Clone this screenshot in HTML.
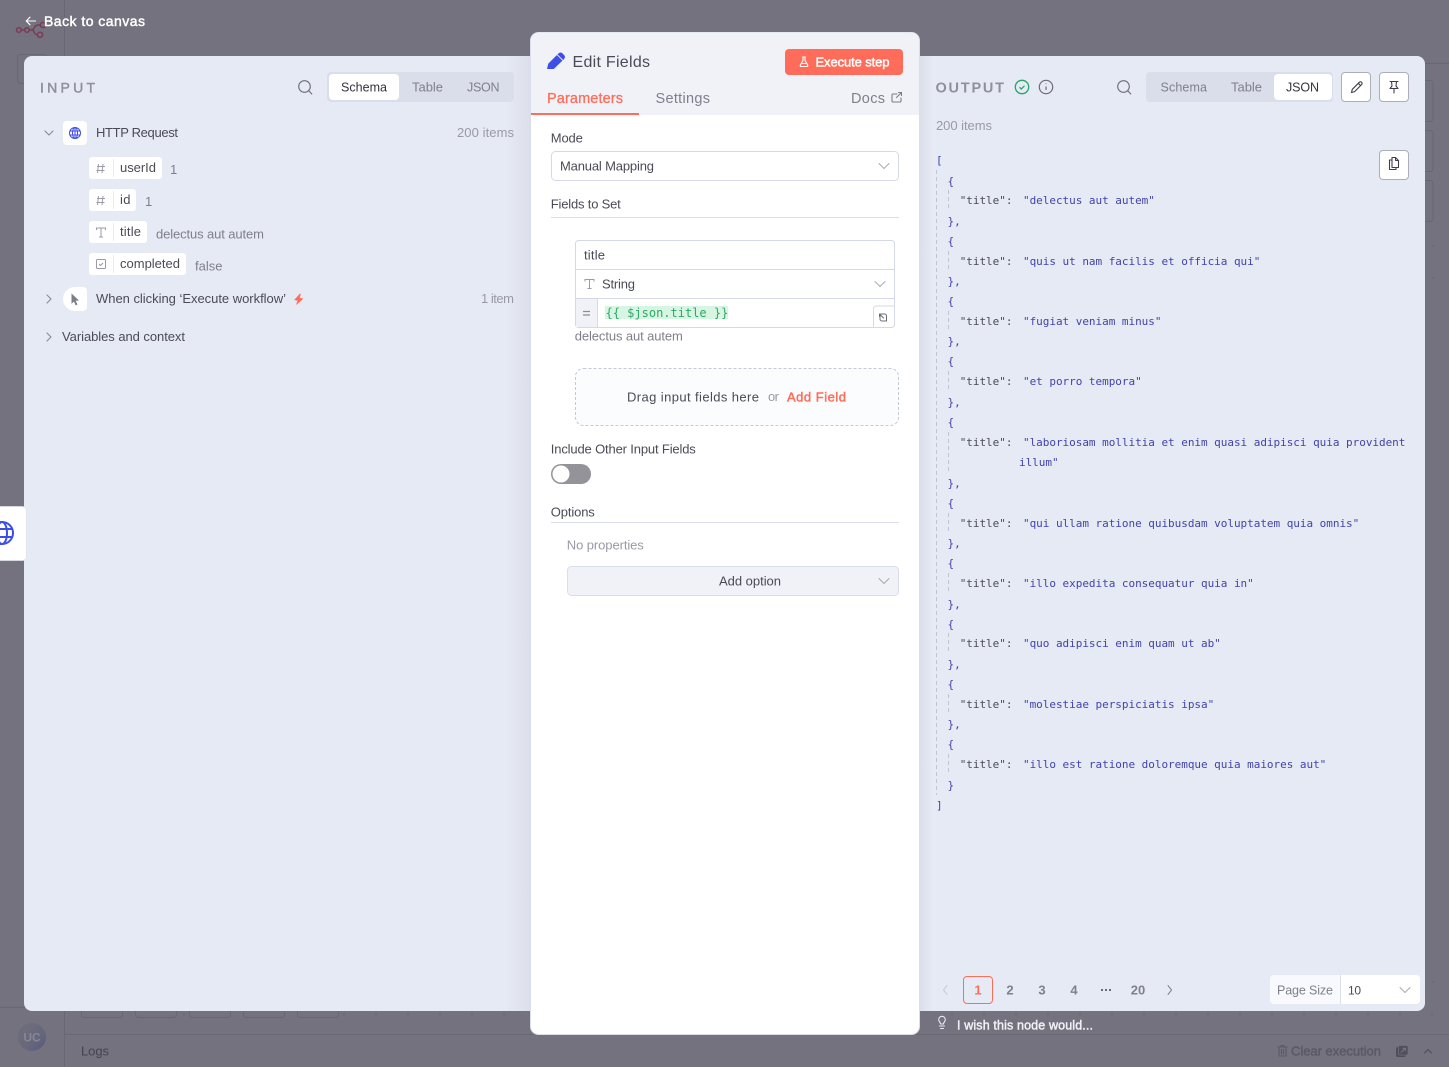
<!DOCTYPE html>
<html lang="en"><head><meta charset="utf-8"><title>Edit Fields</title>
<style>
html,body{margin:0;padding:0;width:1449px;height:1067px;overflow:hidden;background:#74727e}
svg{position:absolute;left:0;top:0;display:block}
.s{font:13px "Liberation Sans",sans-serif;fill:#4b4b57}
.g{fill:#80808c}
.l{fill:#9a9aa6}
.c{fill:#ff6d5a}
.w{fill:#fff}
.m{stroke:currentColor;stroke-width:.45px}
.t{font-size:12.5px}
.j{font:11px "DejaVu Sans Mono",monospace;fill:#4a4a55;letter-spacing:-.03px}
.v{fill:#4343ab}
.i{fill:none;stroke:#6b6b76;stroke-width:1.1;stroke-linecap:round;stroke-linejoin:round}
</style></head><body>
<svg width="1449" height="1067" viewBox="0 0 1449 1067" xmlns="http://www.w3.org/2000/svg">
<defs>
<linearGradient id="av" x1="0" y1="0" x2="1" y2="1"><stop offset="0" stop-color="#716f7c"/><stop offset=".6" stop-color="#67677c"/><stop offset="1" stop-color="#55597f"/></linearGradient>
<linearGradient id="sl" x1="0" x2="1"><stop offset="0" stop-color="#e6eaf4"/><stop offset="1" stop-color="#dcdfea"/></linearGradient>
<linearGradient id="sr" x1="0" x2="1"><stop offset="0" stop-color="#dcdfea"/><stop offset="1" stop-color="#e6eaf4"/></linearGradient>
</defs>

<!-- backdrop -->
<g fill="none" stroke="#696773">
<path d="M64.500 0V1067M65 1034.500H1449M0 1007.500H64M1425 63.500H1449"/>
<rect x="17.500" y="54.500" width="29" height="29" rx="3"/>
<rect x="1400" y="80.500" width="33" height="41" rx="3"/>
<rect x="1400" y="130.500" width="33" height="41" rx="3"/>
<rect x="1400" y="180.500" width="33" height="41" rx="3"/>
<rect x="81.500" y="990" width="41" height="27.500" rx="3"/>
<rect x="135.500" y="990" width="41" height="27.500" rx="3"/>
<rect x="189.500" y="990" width="41" height="27.500" rx="3"/>
<rect x="243.500" y="990" width="41" height="27.500" rx="3"/>
<rect x="297.500" y="990" width="41" height="27.500" rx="3"/>
</g>
<g fill="#62606c">
<circle cx="184" cy="1014.500" r=".8"/><circle cx="344" cy="1014.500" r=".8"/><circle cx="376" cy="1014.500" r=".8"/><circle cx="408" cy="1014.500" r=".8"/><circle cx="440" cy="1014.500" r=".8"/><circle cx="472" cy="1014.500" r=".8"/><circle cx="504" cy="1014.500" r=".8"/>
<circle cx="952" cy="1014.500" r=".8"/><circle cx="984" cy="1014.500" r=".8"/><circle cx="1016" cy="1014.500" r=".8"/><circle cx="1048" cy="1014.500" r=".8"/><circle cx="1080" cy="1014.500" r=".8"/><circle cx="1112" cy="1014.500" r=".8"/><circle cx="1144" cy="1014.500" r=".8"/><circle cx="1176" cy="1014.500" r=".8"/><circle cx="1208" cy="1014.500" r=".8"/><circle cx="1240" cy="1014.500" r=".8"/><circle cx="1272" cy="1014.500" r=".8"/><circle cx="1304" cy="1014.500" r=".8"/><circle cx="1336" cy="1014.500" r=".8"/><circle cx="1368" cy="1014.500" r=".8"/><circle cx="1400" cy="1014.500" r=".8"/><circle cx="1432" cy="1014.500" r=".8"/>
<circle cx="1433" cy="246" r=".8"/><circle cx="1433" cy="278" r=".8"/><circle cx="1433" cy="982" r=".8"/>
</g>
<!-- n8n logo -->
<g fill="none" stroke="#7b3a55" stroke-width="1.500">
<circle cx="18.800" cy="30" r="2.300"/><circle cx="27" cy="30" r="2.300"/><circle cx="40" cy="34.800" r="2.600"/><circle cx="43" cy="25" r="2.600"/>
<path d="M21.100 30h3.600M29.300 30h2.700c2.500 0 1.500 4.800 5.400 4.800M32 30c2.400 0 1.600-5 6-5h2.400"/>
</g>
<circle cx="32" cy="1037" r="14" fill="url(#av)"/>
<text x="32" y="1041.500" text-anchor="middle" font-family="Liberation Sans" font-size="12" font-weight="700" fill="#888693">UC</text>
<path class="i" style="stroke:#fff" d="M35.500 21h-9M30 17.200 26.200 21l3.800 3.800"/>
<text class="s w m" style="font-size:14px;color:#fff" x="44" y="26" textLength="101">Back to canvas</text>
<text class="s" style="fill:#44434f" x="81" y="1055.500" textLength="28">Logs</text>
<g class="i" style="stroke:#5a5964"><path d="M1278 1047h9M1281 1047v-1.500h3v1.500M1279 1047.500v8.500h7v-8.500M1281.500 1049.500v4.500M1283.500 1049.500v4.500"/></g>
<text class="s m" style="fill:#5a5964;color:#5a5964" x="1291" y="1055.500" textLength="90">Clear execution</text>
<rect x="1396.500" y="1047.500" width="9" height="9" rx="1.500" fill="#4f4e59" stroke="#4f4e59"/><rect x="1398.500" y="1045.500" width="9.500" height="9.500" rx="1.500" fill="#4f4e59" stroke="#74727e" stroke-width=".7"/>
<path d="M1400.800 1052.700l4.500-4.500M1402.300 1048.200h3v3" fill="none" stroke="#7d7c88" stroke-width=".9"/>
<path class="i" style="stroke:#4f4e59" d="M1424.500 1053l3.500-3.500 3.500 3.500"/>
<path class="i" style="stroke:#e8e8ee" d="M939.500 1026h5M940.500 1028.500h3M940.500 1024c0-2-1.800-2.300-1.800-4.400a3.300 3.300 0 0 1 6.600 0c0 2.100-1.800 2.400-1.800 4.400z"/>
<text class="s w m" style="font-size:12.500px;color:#f1f1f4;fill:#f1f1f4" x="957" y="1029.500" textLength="136">I wish this node would...</text>

<!-- panels -->
<rect x="24" y="56" width="1401" height="955" rx="8" fill="#e6eaf4"/>
<rect x="505" y="56" width="26" height="955" fill="url(#sl)"/>
<rect x="919" y="56" width="14" height="955" fill="url(#sr)"/>
<!-- side node tab -->
<rect x="-12" y="506.500" width="38.500" height="54" rx="4" fill="#fff" stroke="#dfe2eb" stroke-width=".8"/>
<g fill="none" stroke="#3d4de8" stroke-width="2">
<circle cx="2" cy="533" r="11"/><ellipse cx="2" cy="533" rx="5" ry="11"/><path d="M-9 529h22M-9 537h22"/></g>

<!-- INPUT -->
<text class="s m" style="font-size:14px;fill:#90909b;color:#90909b" x="40" y="92.500" textLength="55">INPUT</text>
<g class="i"><circle cx="304.500" cy="86.500" r="5.800"/><path d="M309 91l2.800 3"/></g>
<rect x="327" y="72" width="187" height="30" rx="4" fill="#d9deea"/>
<rect x="329" y="74" width="70" height="26" rx="4" fill="#fff"/>
<text class="s t" style="fill:#33333d" x="341" y="91.500" textLength="46">Schema</text>
<text class="s g" x="412" y="91.500" textLength="31">Table</text>
<text class="s g t" x="467" y="91.500" textLength="32.500">JSON</text>

<path class="i" d="M45 131l4 4 4-4" style="stroke:#8a8a95"/>
<rect x="63" y="121" width="24" height="24" rx="4" fill="#fff"/>
<g fill="none" stroke="#3f4fe6" stroke-width="1"><circle cx="75" cy="133" r="5.500"/><ellipse cx="75" cy="133" rx="2.500" ry="5.500"/><path d="M69.500 131h11M69.500 135h11M75 127.500v11"/></g>
<text class="s" x="96" y="137" textLength="82">HTTP Request</text>
<text class="s l" x="457" y="137" textLength="57">200 items</text>

<g fill="#fff">
<rect x="89" y="157" width="73" height="22" rx="3"/>
<rect x="89" y="189" width="47" height="22" rx="3"/>
<rect x="89" y="221" width="58" height="22" rx="3"/>
<rect x="89" y="253" width="97" height="22" rx="3"/>
</g>
<path d="M113.500 159v18M113.500 191v18M113.500 223v18M113.500 255v18" stroke="#e6eaf4"/>
<g fill="none" stroke="#9b9ba6" stroke-width="1">
<path d="M98.500 164l-1 9M103 164l-1 9M97 166.500h8M96.500 170.500h8"/>
<path d="M98.500 196l-1 9M103 196l-1 9M97 198.500h8M96.500 202.500h8"/>
<path d="M96.500 230v-2h9v2M101 228v9M99 237h4"/>
<rect x="96.500" y="259.500" width="9" height="9" rx="1"/><path d="M99 264l1.500 1.500 2.500-2.500"/>
</g>
<text class="s" x="120" y="172" textLength="36">userId</text>
<text class="s g" x="170" y="174" textLength="5.500">1</text>
<text class="s" x="120" y="204" textLength="10.500">id</text>
<text class="s g" x="145" y="206" textLength="5.500">1</text>
<text class="s" x="120" y="236" textLength="21">title</text>
<text class="s g" x="156" y="238.500" textLength="108">delectus aut autem</text>
<text class="s" x="120" y="268" textLength="60">completed</text>
<text class="s g" x="195" y="270.500" textLength="27.500">false</text>

<path class="i" d="M47 295l4 4-4 4" style="stroke:#8a8a95"/>
<path d="M75 287h8a4 4 0 0 1 4 4v16a4 4 0 0 1-4 4h-8a12 12 0 0 1 0-24z" fill="#fff"/>
<path d="M71.500 293.500l7.500 7-3.300.3 1.800 3.800-1.800.8-1.700-3.800-2.500 2.200z" fill="#7d7d88"/>
<text class="s" x="96" y="303" textLength="190">When clicking ‘Execute workflow’</text>
<path d="M300 294l-5.300 5.800 3.300.6-1.500 4 6.300-5.700-3.400-.7 1.100-4z" fill="#ff6d5a" stroke="#ff6d5a" stroke-width=".6" stroke-linejoin="round"/>
<text class="s l" x="481" y="303" textLength="33">1 item</text>
<path class="i" d="M47 333l4 4-4 4" style="stroke:#8a8a95"/>
<text class="s" x="62" y="341" textLength="123">Variables and context</text>

<!-- OUTPUT -->
<text class="s" style="font-size:14.500px;fill:#90909b;font-weight:700" x="935.500" y="92.500" textLength="68.500">OUTPUT</text>
<circle cx="1022" cy="87" r="6.700" fill="none" stroke="#29a568" stroke-width="1.300"/><path d="M1019.500 87.200l1.800 1.800 3.200-3.200" fill="none" stroke="#29a568" stroke-width="1.300"/>
<circle cx="1046" cy="87" r="6.700" fill="none" stroke="#6b6b76" stroke-width="1.200"/><path d="M1046 86.500v3.500M1046 83.500v.6" stroke="#6b6b76" stroke-width="1.200"/>
<g class="i"><circle cx="1123.500" cy="86.500" r="5.800"/><path d="M1128 91l2.800 3"/></g>
<rect x="1146" y="72" width="187" height="30" rx="4" fill="#d9deea"/>
<rect x="1274" y="74" width="58" height="26" rx="4" fill="#fff"/>
<text class="s g t" x="1160.500" y="91.500" textLength="46.500">Schema</text>
<text class="s g" x="1231" y="91.500" textLength="31">Table</text>
<text class="s t" style="fill:#33333d" x="1286" y="91.500" textLength="33">JSON</text>
<rect x="1341.500" y="72.500" width="29" height="29" rx="3.500" fill="#fff" stroke="#aeaeb8"/>
<rect x="1379.500" y="72.500" width="29" height="29" rx="3.500" fill="#fff" stroke="#aeaeb8"/>
<rect x="1379.500" y="150.500" width="29" height="29" rx="3.500" fill="#fff" stroke="#aeaeb8"/>
<path class="i" style="stroke:#3f3f4a" d="M1351.500 92.500l.8-3.200 7-7a1.500 1.500 0 0 1 2.300 2.300l-7 7zM1358.300 83.300l2.100 2.100"/>
<path class="i" style="stroke:#3f3f4a" d="M1390 81.500h8M1391.500 81.500l.5 4.500-2 2.500h8l-2-2.500.5-4.500M1394 88.500v4.500"/>
<path class="i" style="stroke:#3f3f4a" d="M1392 157.500h3.500l3 3v7h-6.500zM1395.500 157.500v3h3M1392 160h-2.500v9.500h6.500v-2"/>
<text class="s l" x="936" y="130" textLength="56">200 items</text>

<path d="M936.500 170V795" stroke="#bfc4d2" stroke-dasharray="4 3"/>
<path d="M948.500 190v21M948.500 251v21M948.500 311v21M948.500 371v21M948.500 432v41M948.500 513v21M948.500 573v21M948.500 633v21M948.500 694v21M948.500 754v21" stroke="#bfc4d2" stroke-dasharray="4 3"/>
<g class="j">
<text class="v" x="936" y="164">[</text>
<text class="v" x="947.500" y="185">{</text><text x="959.700" y="204">"title":</text><text class="v" x="1023" y="204">"delectus aut autem"</text><text class="v" x="947.500" y="225">},</text>
<text class="v" x="947.500" y="245">{</text><text x="959.700" y="265">"title":</text><text class="v" x="1023" y="265">"quis ut nam facilis et officia qui"</text><text class="v" x="947.500" y="285">},</text>
<text class="v" x="947.500" y="305">{</text><text x="959.700" y="325">"title":</text><text class="v" x="1023" y="325">"fugiat veniam minus"</text><text class="v" x="947.500" y="345">},</text>
<text class="v" x="947.500" y="365">{</text><text x="959.700" y="385">"title":</text><text class="v" x="1023" y="385">"et porro tempora"</text><text class="v" x="947.500" y="406">},</text>
<text class="v" x="947.500" y="426">{</text><text x="959.700" y="446">"title":</text><text class="v" x="1023" y="446">"laboriosam mollitia et enim quasi adipisci quia provident</text><text class="v" x="1019" y="466">illum"</text><text class="v" x="947.500" y="487">},</text>
<text class="v" x="947.500" y="507">{</text><text x="959.700" y="527">"title":</text><text class="v" x="1023" y="527">"qui ullam ratione quibusdam voluptatem quia omnis"</text><text class="v" x="947.500" y="547">},</text>
<text class="v" x="947.500" y="567">{</text><text x="959.700" y="587">"title":</text><text class="v" x="1023" y="587">"illo expedita consequatur quia in"</text><text class="v" x="947.500" y="608">},</text>
<text class="v" x="947.500" y="628">{</text><text x="959.700" y="647">"title":</text><text class="v" x="1023" y="647">"quo adipisci enim quam ut ab"</text><text class="v" x="947.500" y="668">},</text>
<text class="v" x="947.500" y="688">{</text><text x="959.700" y="708">"title":</text><text class="v" x="1023" y="708">"molestiae perspiciatis ipsa"</text><text class="v" x="947.500" y="728">},</text>
<text class="v" x="947.500" y="748">{</text><text x="959.700" y="768">"title":</text><text class="v" x="1023" y="768">"illo est ratione doloremque quia maiores aut"</text><text class="v" x="947.500" y="789">}</text>
<text class="v" x="936" y="809">]</text>
</g>

<!-- pagination -->
<path class="i" style="stroke:#c8ccd8" d="M947 985.500l-3.500 4.500 3.500 4.500"/>
<rect x="963.500" y="976.500" width="29" height="27" rx="3.500" fill="none" stroke="#ff6d5a"/>
<g class="s" style="font-weight:700" text-anchor="middle">
<text class="c" x="978" y="994.500">1</text>
<text class="g" x="1010" y="994.500">2</text>
<text class="g" x="1042" y="994.500">3</text>
<text class="g" x="1074" y="994.500">4</text>
<text class="g" x="1138" y="994.500">20</text>
</g>
<path d="M1101 990h2M1105 990h2M1109 990h2" stroke="#6b6b76" stroke-width="2"/>
<path class="i" style="stroke-width:.9" d="M1168 985.500l3.500 4.500-3.500 4.500"/>
<rect x="1270" y="975" width="150" height="29" rx="4" fill="#fff"/>
<path d="M1274 975h66v29h-66a4 4 0 0 1-4-4v-21a4 4 0 0 1 4-4z" fill="#f8f9fc"/>
<path d="M1340.500 975v29" stroke="#d9deea"/>
<text class="s g t" x="1277" y="994.500" textLength="56">Page Size</text>
<text class="s" style="font-size:12px" x="1348" y="994.500" textLength="13">10</text>
<path class="i" style="stroke:#a5a5b0;stroke-width:.9" d="M1400 987.500l5 5 5-5"/>

<!-- CENTER PANEL -->
<rect x="530.500" y="32.500" width="389" height="1002" rx="8" fill="#fff" stroke="#d9deea"/>
<path d="M531 115V40.500a8 8 0 0 1 8-8h372.500a8 8 0 0 1 7.500 8V115z" fill="#f0f2f8"/>
<path d="M531 113h108v2H531z" fill="#ff6d5a"/>
<path d="M547 69l1.200-5.300 10.300-10.300a2.800 2.800 0 0 1 4 0l1.600 1.600a2.800 2.800 0 0 1 0 4L553.800 69z" fill="#3d4fe8"/><path d="M557.200 54.700l5.600 5.600" stroke="#f0f2f8"/>
<text class="s" style="font-size:16px" x="572.500" y="67" textLength="77.500">Edit Fields</text>
<rect x="785" y="49" width="118" height="26" rx="4" fill="#ff6d5a"/>
<path class="i" style="stroke:#fff" d="M802.500 57h3M803 57v3.500l-2.700 4.600c-.3.700.1 1.400.8 1.400h5.800c.7 0 1.100-.7.800-1.400L805 60.500V57M801.500 63.500h5"/>
<text class="s w m" style="color:#fff" x="815.500" y="66.500" textLength="74">Execute step</text>
<text class="s c m" style="font-size:14.500px;color:#ff6d5a;stroke-width:.3px" x="547" y="103" textLength="76">Parameters</text>
<text class="s g" style="font-size:14.500px" x="655.500" y="103" textLength="54.500">Settings</text>
<text class="s g" style="font-size:14.500px" x="851" y="103" textLength="34">Docs</text>
<path class="i" style="stroke:#7d7d88" d="M897 94h-4a1 1 0 0 0-1 1v6a1 1 0 0 0 1 1h7a1 1 0 0 0 1-1v-3M896.500 97.500l5-5M898.500 92.500h3v3"/>

<text class="s" x="550.800" y="142.500" textLength="32">Mode</text>
<rect x="551.500" y="151.500" width="347" height="29" rx="4" fill="#fff" stroke="#d5d9e6"/>
<text class="s" x="560" y="170.500" textLength="94">Manual Mapping</text>
<path class="i" style="stroke:#a5a5b0;stroke-width:.9" d="M879 163.500l5 5 5-5"/>
<text class="s" x="550.800" y="208.500" textLength="70">Fields to Set</text>
<path d="M551 217.500h348" stroke="#d9deea"/>

<rect x="575.500" y="240.500" width="319" height="87" rx="3" fill="#fff" stroke="#d5d9e6"/>
<path d="M576 269.500h318M576 298.500h318" stroke="#d5d9e6"/>
<rect x="576" y="299" width="21" height="28" fill="#f0f2f8"/><path d="M597.500 299v28" stroke="#d5d9e6"/>
<text class="s" x="584" y="259.500" textLength="21">title</text>
<path fill="none" stroke="#9b9ba6" d="M585 281.500v-2h9v2M589.500 279.500v9M587.500 288.500h4"/>
<text class="s" x="602" y="288.500" textLength="33">String</text>
<path class="i" style="stroke:#a5a5b0;stroke-width:.9" d="M875 281.500l5 5 5-5"/>
<path d="M583 311.500h7M583 315h7" stroke="#8c8c97" stroke-width="1.200"/>
<rect x="605" y="306" width="123" height="13" fill="#d6f5e3"/>
<text x="605.500" y="317" font-family="DejaVu Sans Mono" font-size="12" fill="#2fa866">{{ $json.title }}</text>
<path d="M873.500 328v-19a3 3 0 0 1 3-3H895" fill="#fff" stroke="#d5d9e6"/>
<path class="i" style="stroke:#6b6b76;stroke-width:1" d="M880 314h4.500a2 2 0 0 1 2 2v5h-4.500a2 2 0 0 1-2-2zM879.500 314l4 4M879.500 314v2.500M879.500 314h2.500"/>
<text class="s g" x="574.800" y="340.500" textLength="108">delectus aut autem</text>

<rect x="575.500" y="368.500" width="323" height="57" rx="8" fill="#fbfcfe" stroke="#c5c9d6" stroke-dasharray="3 2"/>
<text class="s" x="627" y="401.500" textLength="132">Drag input fields here</text>
<text class="s l" x="768" y="401" textLength="11">or</text>
<text class="s c m" style="color:#ff6d5a" x="787" y="401.500" textLength="59">Add Field</text>

<text class="s" x="550.800" y="453.500" textLength="145">Include Other Input Fields</text>
<rect x="551" y="464" width="40" height="20" rx="10" fill="#939399"/>
<circle cx="561" cy="474" r="8.500" fill="#fff"/>

<text class="s" x="550.800" y="516.500" textLength="44">Options</text>
<path d="M551 522.500h348" stroke="#d9deea"/>
<text class="s l" x="566.800" y="549.500" textLength="77">No properties</text>
<rect x="567.500" y="566.500" width="331" height="29" rx="4" fill="#f0f2f8" stroke="#d9deea"/>
<text class="s" x="719" y="585.500" textLength="62">Add option</text>
<path class="i" style="stroke:#a5a5b0;stroke-width:.9" d="M879 578.500l5 5 5-5"/>
</svg>
</body></html>
